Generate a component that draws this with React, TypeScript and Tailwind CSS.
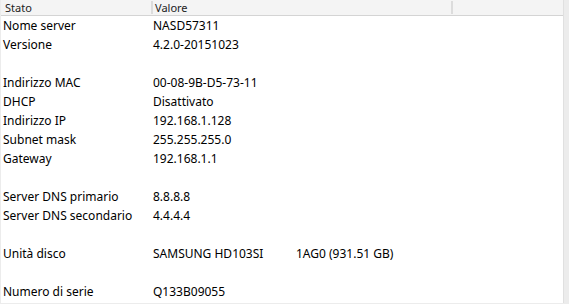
import React from "react";

const rows: [string, string, string?][] = [
	["Nome server", "NASD57311"],
	["Versione", "4.2.0-20151023"],
	["", ""],
	["Indirizzo MAC", "00-08-9B-D5-73-11"],
	["DHCP", "Disattivato"],
	["Indirizzo IP", "192.168.1.128"],
	["Subnet mask", "255.255.255.0"],
	["Gateway", "192.168.1.1"],
	["", ""],
	["Server DNS primario", "8.8.8.8"],
	["Server DNS secondario", "4.4.4.4"],
	["", ""],
	["Unità disco", "SAMSUNG HD103SI", "1AG0 (931.51 GB)"],
	["", ""],
	["Numero di serie", "Q133B09055"],
];

const App: React.FC = () => {
	return (
		<div
			className="w-[569px] h-[304px] bg-[#ececec] flex flex-col overflow-hidden text-black"
			style={{ fontFamily: '"Lucida Grande", "Noto Sans", "DejaVu Sans", sans-serif' }}
		>
			<div className="flex flex-1 min-h-0 pb-[1px]">
				<div className="w-[562px] bg-white flex flex-col ml-[1px]">
					<div className="h-[16px] flex bg-[#f4f4f4] border-b border-[#d4d4d4] text-[11px] leading-[15px] text-[#222]">
						<div className="w-[152px] pl-[4px] border-r-2 border-[#dcdcdc] my-[1px] leading-[13px]">Stato</div>
						<div className="w-[300px] pl-[2px] border-r-2 border-[#dcdcdc] my-[1px] leading-[13px]">Valore</div>
						<div className="flex-1" />
					</div>
					{rows.map(([label, value, extra], i) => (
						<div key={i} className="h-[19px] flex items-center text-[12px] leading-[19px]">
							<div className="w-[152px] pl-[2px] whitespace-nowrap">{label}</div>
							<div className="flex whitespace-nowrap">
								<span className="w-[143px]">{value}</span>
								{extra && <span>{extra}</span>}
							</div>
						</div>
					))}
				</div>
				<div className="flex-1 border-l border-[#e0e0e0]" />
			</div>
		</div>
	);
};

export default App;
